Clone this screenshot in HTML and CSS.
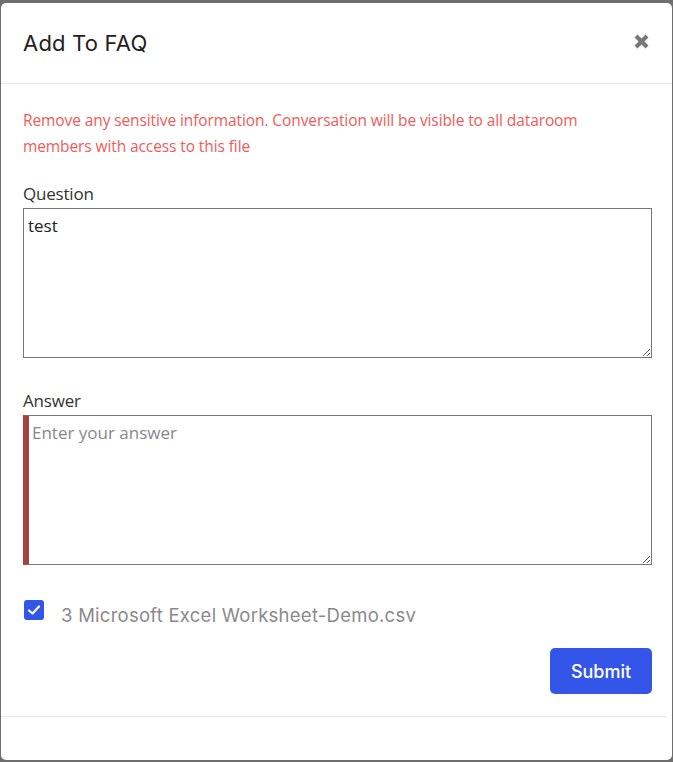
FILE: index.html
```html
<!DOCTYPE html>
<html>
<head>
<meta charset="utf-8">
<link rel="stylesheet" href="styles.css">
</head>
<body>
<div class="modal">
  <div class="modal-header">
    <h2 class="modal-title">Add To FAQ</h2>
    <span class="close">
      <svg width="17" height="17" viewBox="0 0 17 17"><path d="M3 3 L14 14 M14 3 L3 14" stroke="#777" stroke-width="4.2" stroke-linecap="butt"/></svg>
    </span>
  </div>
  <div class="modal-body">
    <p class="warning">Remove any sensitive information. Conversation will be visible to all dataroom members with access to this file</p>
    <div class="field">
      <label class="label">Question</label>
      <textarea class="input">test</textarea>
    </div>
    <div class="field field-answer">
      <label class="label">Answer</label>
      <textarea class="input input-error" placeholder="Enter your answer"></textarea>
    </div>
    <div class="check-row">
      <span class="checkbox">
        <svg width="14" height="12" viewBox="0 0 14 12"><path d="M2 6.5 L5.5 9.5 L12 2.5" fill="none" stroke="#fff" stroke-width="2.2" stroke-linecap="round" stroke-linejoin="round"/></svg>
      </span>
      <span class="check-label">3 Microsoft Excel Worksheet-Demo.csv</span>
    </div>
    <div class="actions">
      <button class="btn">Submit</button>
    </div>
  </div>
  <div class="modal-footer"></div>
</div>
</body>
</html>
```
FILE: styles.css
```css
html, body {
  margin: 0;
  padding: 0;
}
body {
  background: #6e6e6e;
  padding: 3px 0 0 1px;
  height: 762px;
  box-sizing: border-box;
  overflow: hidden;
}
.modal {
  width: 671px;
  height: 757px;
  background: #fff;
  border-radius: 5px;
  display: flex;
  flex-direction: column;
  font-family: "Open Sans", "Noto Sans", sans-serif;
}
.modal-header {
  height: 81px;
  box-sizing: border-box;
  border-bottom: 1px solid #e6e6e6;
  display: flex;
  align-items: center;
  justify-content: space-between;
  padding: 0 22px 0 22px;
}
.modal-title {
  margin: 0;
  font-family: "Inter", sans-serif;
  font-weight: 400;
  font-size: 22px;
  color: #222;
  letter-spacing: 0.2px;
}
.close {
  display: flex;
  margin-top: -4px;
}
.modal-body {
  padding: 23px 20px 0 22px;
}
.warning {
  margin: 0;
  max-width: 600px;
  color: #f25a5a;
  font-size: 15.5px;
  line-height: 26px;
  font-weight: 400;
  letter-spacing: -0.1px;
}
.field {
  margin-top: 23px;
  display: flex;
  flex-direction: column;
}
.field-answer {
  margin-top: 31px;
}
.label {
  font-size: 17px;
  line-height: 24px;
  color: #333;
  margin-bottom: 2px;
  letter-spacing: -0.2px;
}
.input {
  width: 629px;
  height: 150px;
  box-sizing: border-box;
  border: 1px solid #767676;
  font-family: "Open Sans", "Noto Sans", sans-serif;
  font-size: 17px;
  color: #222;
  padding: 5px 4px;
  margin: 0;
  resize: vertical;
  outline: none;
}
.input::placeholder {
  color: #888;
}
.input-error {
  border-left: 6px solid #a94040;
  padding-left: 3px;
}
.check-row {
  margin-top: 35px;
  display: flex;
  align-items: flex-start;
}
.checkbox {
  width: 20px;
  height: 20px;
  background: #3355e8;
  border-radius: 3px;
  display: flex;
  align-items: center;
  justify-content: center;
  margin-left: 1px;
}
.check-label {
  margin-left: 17px;
  line-height: 30px;
  font-family: "Inter", sans-serif;
  font-size: 18.5px;
  color: #8a8a8a;
  letter-spacing: 0.25px;
}
.actions {
  display: flex;
  justify-content: flex-end;
  margin-top: 18px;
}
.btn {
  width: 102px;
  height: 46px;
  background: #3355e8;
  border: none;
  border-radius: 5px;
  color: #fff;
  font-family: "Inter", sans-serif;
  font-size: 18px;
  font-weight: 500;
  margin-right: 0;
}
.modal-footer {
  margin-top: 22px;
  border-top: 1px solid #e6e6e6;
  margin-right: 6px;
}
```
